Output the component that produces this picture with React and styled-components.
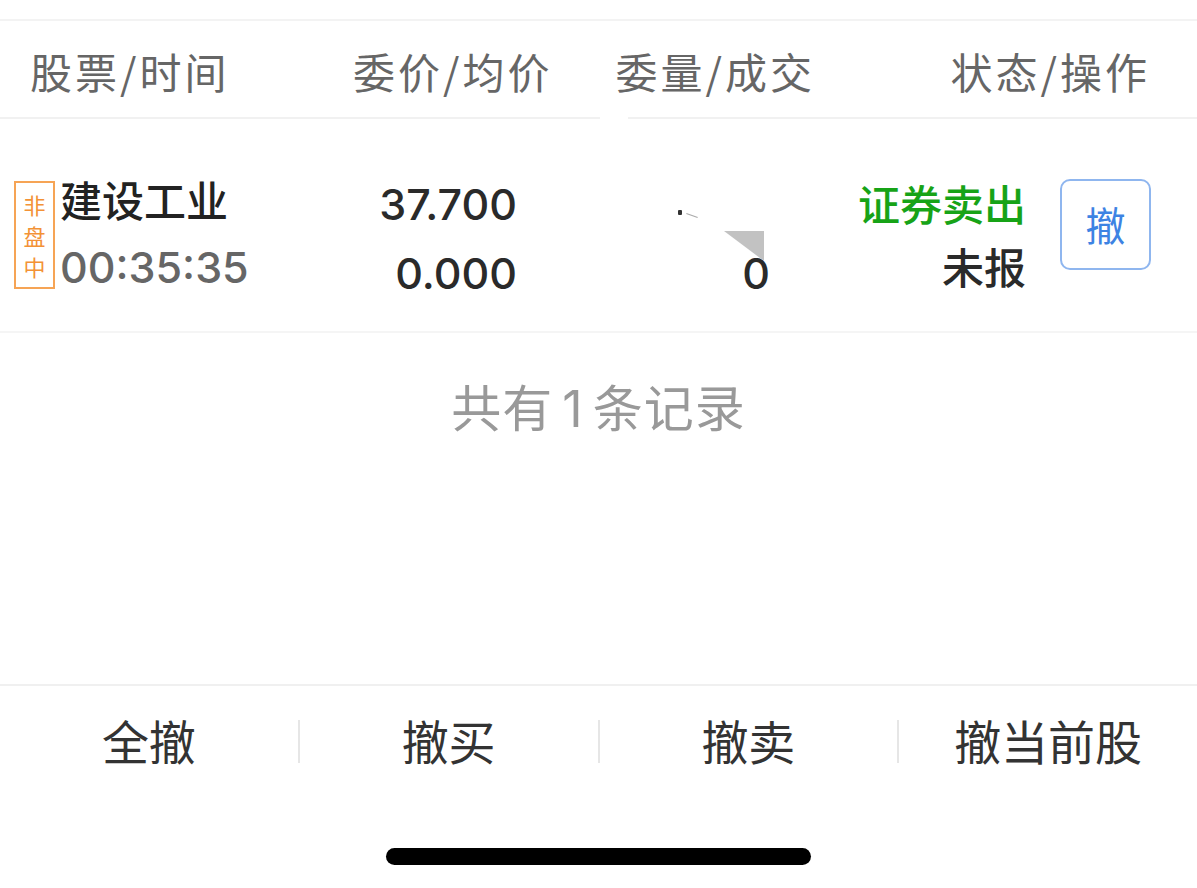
import React from "react";
import styled, { createGlobalStyle } from "styled-components";

const GlobalStyle = createGlobalStyle`
  html, body {
    margin: 0;
    padding: 0;
    background: #fff;
  }
  body {
    font-family: "Inter", "Noto Sans CJK SC", sans-serif;
    -webkit-font-smoothing: antialiased;
  }
`;

const headers = [
  { label: "股票/时间", align: "left", pad: "0 0 0 30px" },
  { label: "委价/均价", align: "right", pad: "0 46px 0 0" },
  { label: "委量/成交", align: "left", pad: "0 0 0 17px" },
  { label: "状态/操作", align: "right", pad: "0 47px 0 0" },
];

const actions = ["全撤", "撤买", "撤卖", "撤当前股"];

function App() {
  return (
    <Page>
      <GlobalStyle />
      <TopStrip />
      <Header>
        {headers.map((h) => (
          <HeaderCell key={h.label} $align={h.align} $pad={h.pad}>
            {h.label}
          </HeaderCell>
        ))}
      </Header>
      <HeaderLine />

      <OrderRow>
        <StockCell>
          <Tag>
            <span>非</span>
            <span>盘</span>
            <span>中</span>
          </Tag>
          <Lines>
            <Name>建设工业</Name>
            <Time>00:35:35</Time>
          </Lines>
        </StockCell>
        <Lines $right>
          <Num>37.700</Num>
          <Num>0.000</Num>
        </Lines>
        <Lines $right>
          <Num />
          <Num>0</Num>
        </Lines>
        <Lines $right $status>
          <Side>证券卖出</Side>
          <Status>未报</Status>
        </Lines>
        <CancelButton>撤</CancelButton>

        <Speck />
        <Smudge />
        <Blot viewBox="0 0 40 30" width="40" height="30">
          <polygon points="0,0 40,0 40,30" fill="#c2c2c2" />
        </Blot>
      </OrderRow>

      <Empty>
        共有<One>1</One>条记录
      </Empty>

      <Toolbar>
        {actions.map((a, i) => (
          <React.Fragment key={a}>
            {i > 0 && <Divider />}
            <Action>{a}</Action>
          </React.Fragment>
        ))}
      </Toolbar>
      <HomeWrap>
        <HomeBar />
      </HomeWrap>
    </Page>
  );
}

const Page = styled.div`
  width: 1197px;
  height: 888px;
  display: flex;
  flex-direction: column;
  overflow: hidden;
  background: #fff;
`;

const TopStrip = styled.div`
  height: 19px;
  border-bottom: 2px solid #f3f3f3;
  flex-shrink: 0;
`;

const Header = styled.div`
  height: 96px;
  display: grid;
  grid-template-columns: repeat(4, 1fr);
  align-items: center;
  flex-shrink: 0;
`;

const HeaderCell = styled.div`
  font-family: "Noto Sans CJK SC", sans-serif;
  font-size: 42px;
  line-height: 50px;
  letter-spacing: 3px;
  color: #666;
  text-align: ${(p) => p.$align};
  padding: ${(p) => p.$pad};
  margin-top: 4px;
  white-space: nowrap;
`;

const HeaderLine = styled.div`
  height: 2px;
  flex-shrink: 0;
  background: linear-gradient(
    to right,
    #f1f1f1 600px,
    transparent 600px,
    transparent 628px,
    #f1f1f1 628px
  );
`;

const OrderRow = styled.div`
  position: relative;
  height: 212px;
  flex-shrink: 0;
  display: grid;
  grid-template-columns: 286px 217px 253px 256px 91px;
  align-items: center;
  padding-left: 14px;
  border-bottom: 2px solid #f5f5f5;
  & > button {
    margin-left: 34px;
  }
`;

const StockCell = styled.div`
  display: flex;
  align-items: center;
  gap: 5px;
  margin-top: 14px;
`;

const Tag = styled.div`
  width: 37px;
  height: 104px;
  border: 2px solid #f6a455;
  display: flex;
  flex-direction: column;
  align-items: center;
  justify-content: center;
  gap: 2px;
  font-family: "Noto Sans CJK SC", sans-serif;
  font-size: 22px;
  line-height: 29px;
  color: #f39236;
  margin-top: 6px;
`;

const Lines = styled.div`
  display: flex;
  flex-direction: column;
  align-items: ${(p) => (p.$right ? "flex-end" : "flex-start")};
  padding-top: ${(p) => (p.$right ? (p.$status ? "18px" : "28px") : "0")};
  line-height: ${(p) => (p.$status ? "63px" : "69px")};
  white-space: nowrap;
`;

const Name = styled.div`
  font-family: "Noto Sans CJK SC", sans-serif;
  font-size: 42px;
  font-weight: 500;
  color: #222;
  margin-top: 2px;
`;

const Time = styled.div`
  font-size: 43px;
  font-weight: 500;
  color: #666;
`;

const Num = styled.div`
  height: 69px;
  font-size: 43px;
  font-weight: 500;
  color: #2a2a2a;
`;

const Side = styled.div`
  font-family: "Noto Sans CJK SC", sans-serif;
  font-size: 42px;
  font-weight: 500;
  color: #17a317;
`;

const Status = styled.div`
  font-family: "Noto Sans CJK SC", sans-serif;
  font-size: 42px;
  font-weight: 500;
  color: #2a2a2a;
`;

const CancelButton = styled.button`
  width: 91px;
  height: 91px;
  box-sizing: border-box;
  border: 2px solid #8fb6ef;
  border-radius: 10px;
  background: #fff;
  color: #3d83e3;
  font-family: "Noto Sans CJK SC", sans-serif;
  font-size: 40px;
  padding: 0;
  display: flex;
  align-items: center;
  justify-content: center;
  margin-top: -2px;
`;

const Speck = styled.div`
  position: absolute;
  left: 678px;
  top: 91px;
  width: 4px;
  height: 5px;
  border-radius: 1px;
  background: #333;
`;

const Smudge = styled.div`
  position: absolute;
  left: 686px;
  top: 96px;
  width: 12px;
  height: 1px;
  background: #aaa;
  transform: rotate(20deg);
`;

const Blot = styled.svg`
  position: absolute;
  left: 724px;
  top: 112px;
`;

const Empty = styled.div`
  flex: 1;
  padding-top: 47px;
  text-align: center;
  font-family: "Noto Sans CJK SC", sans-serif;
  font-size: 50px;
  line-height: 50px;
  color: #999;
  letter-spacing: 1px;
`;

const One = styled.span`
  font-family: "Inter", sans-serif;
  margin: 0 9px;
`;

const Toolbar = styled.div`
  flex-shrink: 0;
  border-top: 2px solid #f0f0f0;
  padding-top: 24px;
  display: flex;
  align-items: center;
`;

const Action = styled.div`
  flex: 1;
  text-align: center;
  font-family: "Noto Sans CJK SC", sans-serif;
  font-size: 47px;
  line-height: 60px;
  color: #333;
`;

const Divider = styled.div`
  width: 2px;
  height: 43px;
  background: #e6e6e6;
  flex-shrink: 0;
  margin-top: 3px;
`;

const HomeWrap = styled.div`
  flex-shrink: 0;
  height: 118px;
  display: flex;
  justify-content: center;
  padding-top: 78px;
  box-sizing: border-box;
`;

const HomeBar = styled.div`
  width: 425px;
  height: 17px;
  border-radius: 9px;
  background: #000;
`;

export default App;
